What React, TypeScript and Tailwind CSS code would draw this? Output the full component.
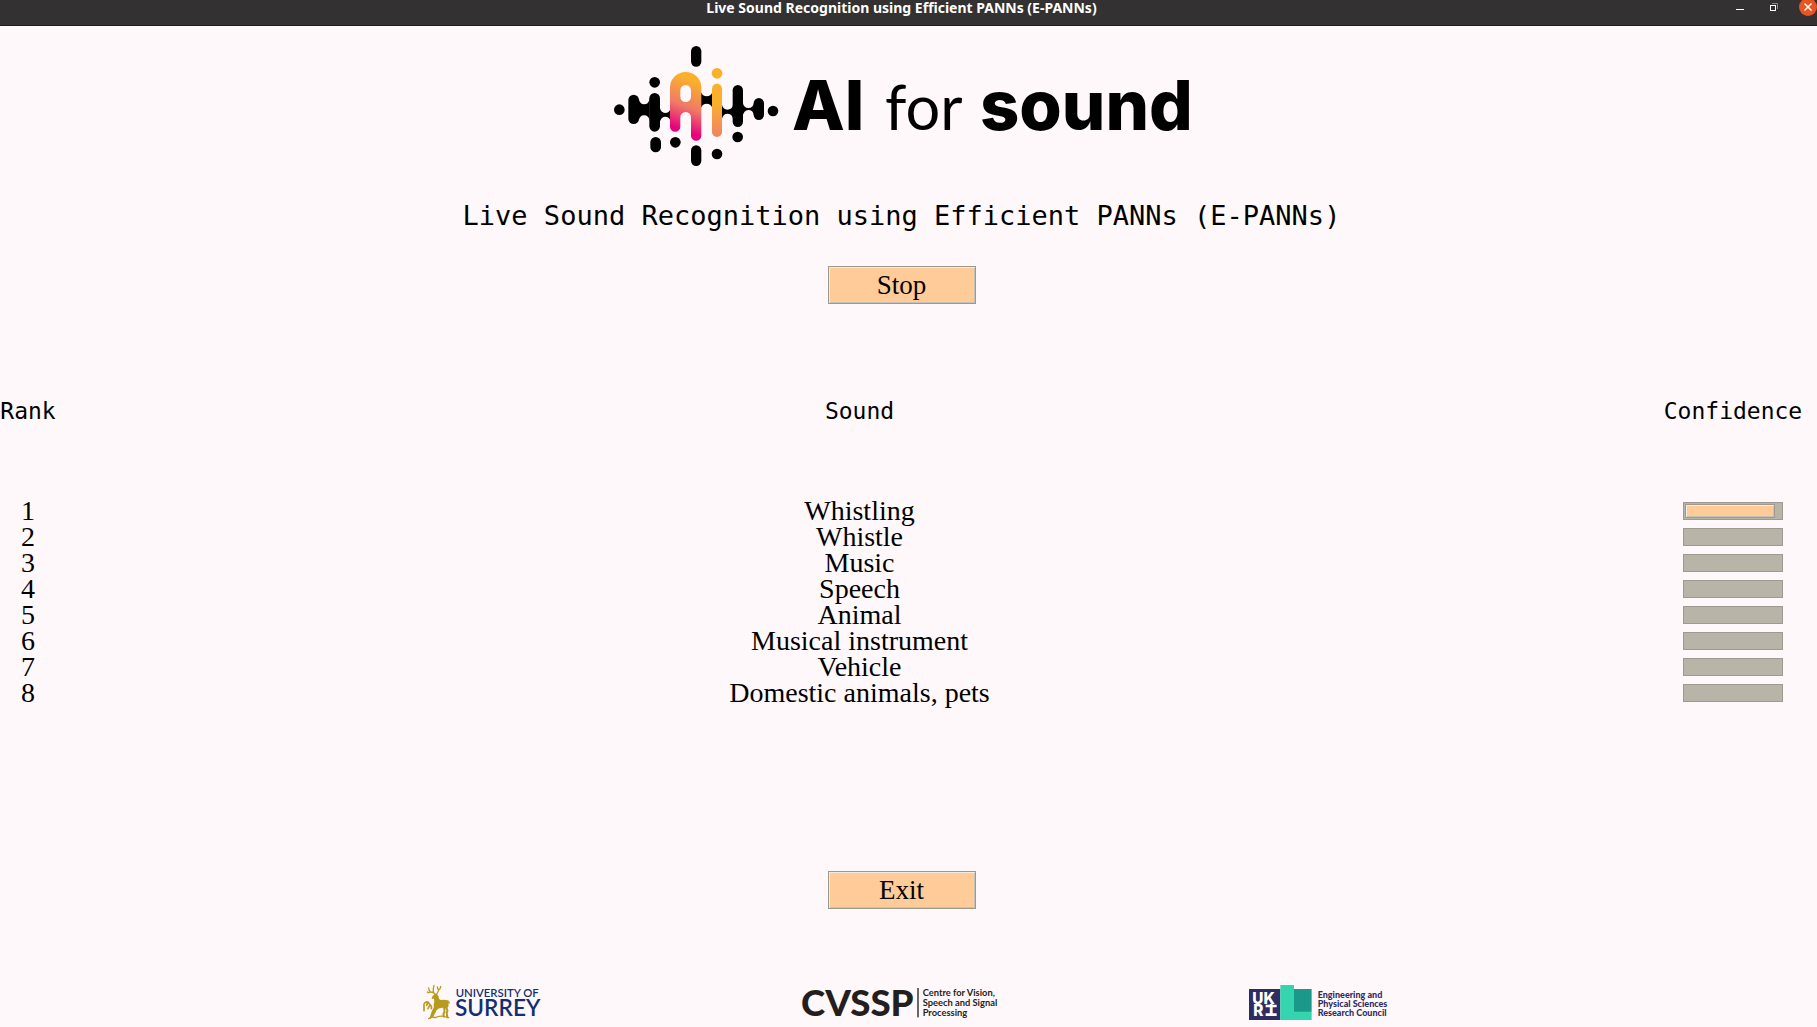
import React from "react";

const TITLE = "Live Sound Recognition using Efficient PANNs (E-PANNs)";

const results = [
  { rank: 1, sound: "Whistling", confidence: 94 },
  { rank: 2, sound: "Whistle", confidence: 0 },
  { rank: 3, sound: "Music", confidence: 0 },
  { rank: 4, sound: "Speech", confidence: 0 },
  { rank: 5, sound: "Animal", confidence: 0 },
  { rank: 6, sound: "Musical instrument", confidence: 0 },
  { rank: 7, sound: "Vehicle", confidence: 0 },
  { rank: 8, sound: "Domestic animals, pets", confidence: 0 },
];

function TitleBar() {
  return (
    <header className="relative flex h-[26px] items-start justify-center border-b border-[#1d1b1b] bg-[#333131] pr-[14px]">
      <h1 className="font-['Noto_Sans',sans-serif] text-[14px] leading-4 font-bold whitespace-nowrap text-white">
        {TITLE}
      </h1>
      <div className="absolute top-0 right-0 flex items-start gap-[14px]">
        <button aria-label="Minimize" className="h-4 w-5">
          <svg viewBox="0 0 20 16" className="h-4 w-5">
            <path d="M5 9.5h8" stroke="#fff" strokeWidth="1" />
          </svg>
        </button>
        <button aria-label="Restore" className="h-4 w-5">
          <svg viewBox="0 0 20 16" className="h-4 w-5" fill="none">
            <path d="M7 3.5h5.5V9" stroke="#8b8989" />
            <rect x="5.5" y="5.5" width="5" height="5" stroke="#fff" />
          </svg>
        </button>
        <button aria-label="Close" className="h-4 w-[18px]">
          <svg viewBox="0 0 18 16" className="h-4 w-[18px]">
            <circle cx="9" cy="7" r="9" fill="#e95420" />
            <path d="M5.5 3.5l7 7M12.5 3.5l-7 7" stroke="#fff" strokeWidth="1.5" />
          </svg>
        </button>
      </div>
    </header>
  );
}

function AiForSoundLogo() {
  return (
    <svg viewBox="42 48 1728 360" className="h-[120px] w-[576px]" role="img" aria-label="AI for sound">
      <defs>
        <linearGradient id="letterA" gradientUnits="userSpaceOnUse" x1="290" y1="155" x2="232" y2="305">
          <stop offset="0" stopColor="#fbb02c" />
          <stop offset="0.5" stopColor="#ef7b66" />
          <stop offset="0.95" stopColor="#e6007e" />
        </linearGradient>
        <linearGradient id="letterI" gradientUnits="userSpaceOnUse" x1="355" y1="220" x2="345" y2="325">
          <stop offset="0" stopColor="#fbb02c" />
          <stop offset="1" stopColor="#ee7f68" />
        </linearGradient>
      </defs>
      <g fill="#000">
        <rect x="273" y="48" width="31" height="62" rx="15.5" />
        <circle cx="164" cy="157" r="16" />
        <circle cx="58" cy="239" r="16" />
        <rect x="85" y="194" width="32" height="88" rx="16" />
        <rect x="148" y="189" width="32" height="116" rx="16" />
        <path d="M116 205Q119 223 132 223Q147 223 149 203V273Q147 256 132 256Q119 256 116 273Z" />
        <path d="M179 232Q183 249 195 249Q208 249 211 237V272Q208 260 195 260Q182 260 179 280Z" />
        <path d="M303 187Q308 199 320 199Q333 199 337 187V233Q332 221 320 221Q308 221 303 233Z" />
        <path d="M366 225Q370 239 382 239Q396 239 399 225V266Q396 251 382 251Q370 251 366 266Z" />
        <rect x="398" y="165" width="31" height="126" rx="15.5" />
        <path d="M428 216Q431 234 445 234Q459 234 462 220V256Q459 240 445 240Q431 240 428 260Z" />
        <rect x="461" y="204" width="31" height="66" rx="15.5" />
        <circle cx="519" cy="243" r="16" />
        <circle cx="413" cy="321" r="16" />
        <circle cx="351" cy="372" r="16" />
        <rect x="273" y="346" width="31" height="62" rx="15.5" />
        <circle cx="226" cy="337" r="16" />
        <rect x="151" y="321" width="32" height="46" rx="16" />
      </g>
      <path
        fill="url(#letterA)"
        fillRule="evenodd"
        d="M210 290V173A47 47 0 0 1 304 173V317A15.5 15.5 0 0 1 273 317V262A16 16 0 0 0 241 262V290A15.5 15.5 0 0 1 210 290ZM241 181V200A16 16 0 0 0 273 200V181A16 16 0 0 0 241 181Z"
      />
      <circle cx="351" cy="130" r="16" fill="#fbb02c" />
      <rect x="336" y="161" width="30" height="160" rx="15" fill="url(#letterI)" />
      <g fill="#000">
        <text x="576" y="300" fontSize="206" className="font-['Inter',sans-serif] font-extrabold">AI</text>
        <text x="855" y="300" fontSize="184" className="font-['Lato',sans-serif] font-normal">for</text>
        <text x="1140" y="300" fontSize="206" className="font-['Inter',sans-serif] font-extrabold">sound</text>
      </g>
    </svg>
  );
}

function SurreyLogo() {
  return (
    <svg viewBox="42 42 369 111" className="h-[37px] w-[123px]" role="img" aria-label="University of Surrey">
      <g fill="none" stroke="#b89b1e" strokeLinecap="round" strokeLinejoin="round">
        <path strokeWidth="4" d="M82 74Q78 66 68 66Q62 62 62 54M68 66Q62 70 58 66M76 67Q75 56 78 46M85 73Q91 66 92 60Q98 57 98 49M92 60Q88 56 88 51" />
        <path strokeWidth="5" d="M48 122V102Q52 94 60 96L66 104Q72 108 70 116M60 96L56 106M66 104L60 116" />
        <path strokeWidth="6" d="M82 110Q74 122 68 143M86 112Q82 124 72 140M112 110Q122 120 116 128L118 142M108 112Q112 124 106 132L108 140" />
        <path strokeWidth="4" d="M62 146Q70 138 82 143Q98 134 122 143" />
        <path strokeWidth="4" d="M120 93L124 99" />
      </g>
      <path fill="#b89b1e" d="M72 80L80 72Q88 70 91 78Q92 88 98 90Q110 88 119 91Q124 98 121 110Q116 118 106 113Q94 112 86 120Q76 116 77 104Q80 94 78 86L71 86Z" />
      <g fill="#12306f" className="font-['Lato',sans-serif] font-semibold">
        <text x="143" y="82" fontSize="34">UNIVERSITY OF</text>
        <text x="141" y="137" fontSize="68">SURREY</text>
      </g>
    </svg>
  );
}

function CvsspLogo() {
  return (
    <svg viewBox="36 48 606 102" className="h-[34px] w-[202px]" role="img" aria-label="CVSSP, Centre for Vision, Speech and Signal Processing">
      <g fill="#231f20" className="font-['Lato',sans-serif]">
        <text x="36" y="137" fontSize="110" className="font-black">CVSSP</text>
        <rect x="385" y="54" width="4" height="88" />
        <g fontSize="28" className="font-bold">
          <text x="401" y="78">Centre for Vision,</text>
          <text x="401" y="107">Speech and Signal</text>
          <text x="401" y="137">Processing</text>
        </g>
      </g>
    </svg>
  );
}

function UkriLogo() {
  return (
    <svg viewBox="60 45 426 105" className="h-[35px] w-[142px]" role="img" aria-label="UKRI Engineering and Physical Sciences Research Council">
      <rect x="60" y="57" width="94" height="93" fill="#2e2d62" />
      <path fill="#34d5ae" d="M154 45H195V57H248V150H154Z" />
      <rect x="195" y="57" width="52" height="68" fill="#1a988a" />
      <g fill="#fff" fontSize="46" className="font-['Inter',sans-serif] font-extrabold">
        <text x="70" y="101">UK</text>
        <text x="73" y="138">R</text>
        <text x="120" y="138">I</text>
      </g>
      <path d="M110 108H143M110 134H143" stroke="#fff" strokeWidth="8" />
      <g fill="#2e2d62" fontSize="27" className="font-['Lato',sans-serif] font-black">
        <text x="266" y="85">Engineering and</text>
        <text x="266" y="112">Physical Sciences</text>
        <text x="266" y="139">Research Council</text>
      </g>
    </svg>
  );
}

function ActionButton({ children }: { children: React.ReactNode }) {
  return (
    <button className="flex h-[38px] w-[148px] items-center justify-center border border-[#9c9a8f] bg-[#ffcc99] font-['Liberation_Serif',serif] text-[27px] leading-none text-black shadow-[inset_1px_1px_0_#efebe7,inset_-1px_-1px_0_#c5c2b8]">
      {children}
    </button>
  );
}

function ConfidenceBar({ value, label }: { value: number; label: string }) {
  return (
    <div
      role="progressbar"
      aria-label={label}
      aria-valuenow={value}
      aria-valuemin={0}
      aria-valuemax={100}
      className="mx-auto h-[18px] w-[100px] border border-[#9e9a91] bg-[#b8b4a8] p-px"
    >
      {value > 0 && (
        <div
          className="h-full border border-[#9e9a91] bg-[#ffcc99] shadow-[inset_1px_1px_0_#efebe7,inset_-1px_-1px_0_#c5c2b8]"
          style={{ width: `${value}%` }}
        />
      )}
    </div>
  );
}

export default function App() {
  return (
    <div className="min-h-screen bg-[#fff8fa] text-black">
      <TitleBar />
      <main className="flex flex-col items-center pt-5 pr-[14px]">
        <AiForSoundLogo />
        <h2 className="mt-8 font-['DejaVu_Sans_Mono',monospace] text-[27px] leading-9 whitespace-nowrap">{TITLE}</h2>
        <div className="mt-8">
          <ActionButton>Stop</ActionButton>
        </div>
        <table className="mt-[90px] w-full table-fixed border-collapse text-center">
          <thead>
            <tr className="font-['DejaVu_Sans_Mono',monospace] text-[23px] leading-[34px]">
              <th className="w-14 pb-[70px] font-normal">Rank</th>
              <th className="pb-[70px] font-normal">Sound</th>
              <th className="w-[140px] pb-[70px] font-normal">Confidence</th>
            </tr>
          </thead>
          <tbody className="font-['Liberation_Serif',serif] text-[28px] leading-[26px]">
            {results.map((r) => (
              <tr key={r.rank} className="h-[26px]">
                <td>{r.rank}</td>
                <td>{r.sound}</td>
                <td className="align-middle">
                  <ConfidenceBar value={r.confidence} label={`${r.sound} confidence`} />
                </td>
              </tr>
            ))}
          </tbody>
        </table>
        <div className="mt-[165px]">
          <ActionButton>Exit</ActionButton>
        </div>
        <footer className="mt-[75px] grid w-full max-w-[1254px] grid-cols-3 items-center justify-items-center">
          <SurreyLogo />
          <CvsspLogo />
          <UkriLogo />
        </footer>
      </main>
    </div>
  );
}
